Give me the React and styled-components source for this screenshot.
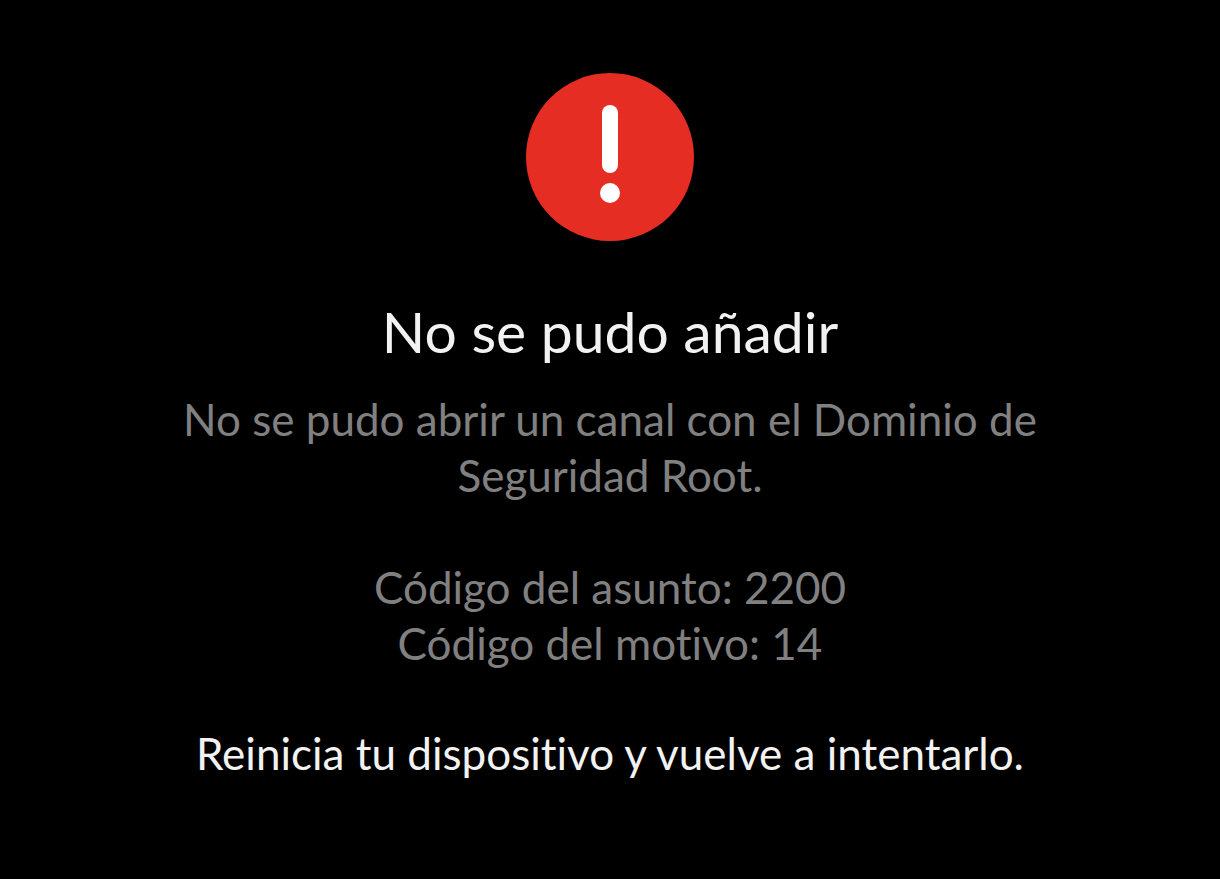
import React from 'react';
import styled, { createGlobalStyle } from 'styled-components';

const GlobalStyle = createGlobalStyle`
  body {
    margin: 0;
    background: #000;
    font-family: Lato, sans-serif;
    font-variant-ligatures: none;
  }
`;

const Screen = styled.main`
  min-height: 100vh;
  box-sizing: border-box;
  padding: 73px 24px 40px;
  display: flex;
  flex-direction: column;
  align-items: center;
  text-align: center;
`;

const ErrorIcon = styled.svg`
  width: 168px;
  height: 168px;
`;

const Title = styled.h1`
  margin: 54px 0 0;
  color: #f2f2f2;
  font-size: 57px;
  font-weight: 400;
  line-height: 72px;
`;

const Text = styled.p`
  max-width: 900px;
  margin: ${({ $gap }) => $gap}px 0 0;
  color: ${({ $strong }) => ($strong ? '#f2f2f2' : '#808080')};
  font-size: 44px;
  line-height: 56px;
`;

const App = () => {
  return (
    <>
      <GlobalStyle />
      <Screen>
        <ErrorIcon viewBox="0 0 168 168" role="img" aria-label="Error">
          <circle cx="84" cy="84" r="84" fill="#e52d23" />
          <rect x="76" y="32" width="16" height="68" rx="8" fill="#fff" />
          <circle cx="84" cy="120" r="10" fill="#fff" />
        </ErrorIcon>
        <Title>No se pudo añadir</Title>
        <Text $gap={24}>
          No se pudo abrir un canal con el Dominio de Seguridad Root.
        </Text>
        <Text $gap={56}>
          Código del asunto: 2200
          <br />
          Código del motivo: 14
        </Text>
        <Text $gap={54} $strong>
          Reinicia tu dispositivo y vuelve a intentarlo.
        </Text>
      </Screen>
    </>
  );
};

export default App;
